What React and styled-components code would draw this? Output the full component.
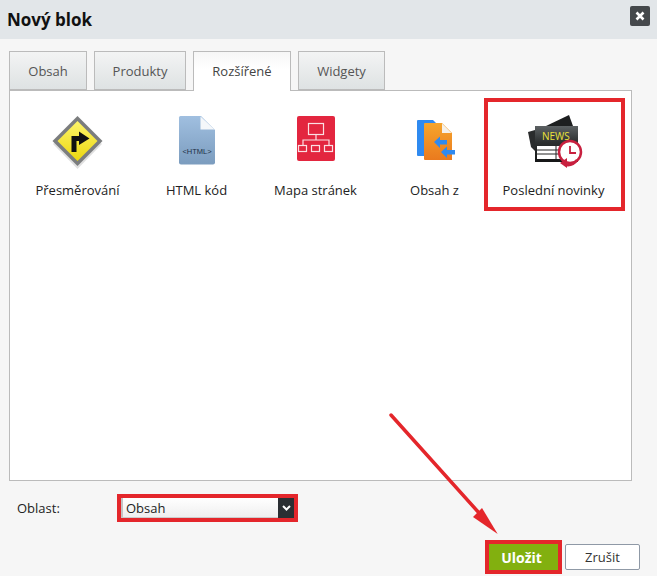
import React from "react";
import styled, { createGlobalStyle } from "styled-components";

const GlobalStyle = createGlobalStyle`
  html, body {
    margin: 0;
    padding: 0;
    height: 100%;
    overflow: hidden;
    background: #f6f6f6;
    font-family: "Open Sans", "Liberation Sans", sans-serif;
  }
`;

const Dialog = styled.div`
  position: relative;
  width: 657px;
  height: 576px;
  background: #f6f6f6;
  color: #222;
  font-size: 13px;
`;

const Header = styled.header`
  display: flex;
  align-items: center;
  justify-content: space-between;
  height: 39px;
  padding: 0 7px 0 7px;
  background: #e2e6e9;
`;

const Title = styled.h1`
  margin: 0;
  font-size: 17px;
  font-weight: 700;
  line-height: 36px;
  color: #111;
`;

const CloseButton = styled.button`
  display: flex;
  align-items: center;
  justify-content: center;
  width: 20px;
  height: 20px;
  margin-bottom: 7px;
  padding: 0;
  border: 0;
  border-radius: 2px;
  background: #45494c;
`;

const Body = styled.div`
  padding: 12px 25px 0 9px;
`;

const Tabs = styled.div`
  display: flex;
  gap: 7px;
  height: 39px;
`;

const Tab = styled.div`
  box-sizing: border-box;
  width: ${(p) => p.$width}px;
  height: ${(p) => (p.$active ? "40px" : "39px")};
  border: 1px solid #bbb;
  border-bottom: ${(p) => (p.$active ? "0" : "1px solid #bbb")};
  background: ${(p) =>
    p.$active
      ? "linear-gradient(#f6f6f6, #fff 45%)"
      : "linear-gradient(#f3f4f4, #dee2e3)"};
  color: ${(p) => (p.$active ? "#444" : "#555")};
  line-height: 38px;
  text-align: center;
  position: relative;
  z-index: ${(p) => (p.$active ? 1 : 0)};
`;

const Panel = styled.div`
  box-sizing: border-box;
  display: flex;
  height: 391px;
  padding: 18px 0 0 9px;
  border: 1px solid #bbb;
  background: #fff;
`;

const Item = styled.div`
  position: relative;
  display: flex;
  flex-direction: column;
  align-items: center;
  width: 119px;
  height: 92px;

  ${(p) =>
    p.$marked &&
    `
    &::after {
      content: "";
      position: absolute;
      left: -11px;
      top: -11px;
      width: 141px;
      height: 113px;
      box-sizing: border-box;
      border: 4px solid #e4262b;
    }
  `}
`;

const IconSlot = styled.svg`
  display: block;
  width: 65px;
  height: 64px;
`;

const ItemLabel = styled.span`
  margin: 8px 2px 0 0;
  line-height: 18px;
  color: #222;
  white-space: nowrap;
`;

const AreaRow = styled.div`
  display: flex;
  align-items: center;
  height: 20px;
  margin-top: 17px;
  padding-left: 8px;
`;

const AreaLabel = styled.label`
  width: 104px;
  color: #222;
`;

const Select = styled.div`
  box-sizing: border-box;
  display: flex;
  width: 173px;
  height: 20px;
  outline: 4px solid #e4262b;
  border-left: 2px solid #c4c4c4;
  border-bottom: 1px solid #ccc;
  background: linear-gradient(#fff, #efefef);
`;

const SelectValue = styled.span`
  flex: 1;
  padding-left: 3px;
  line-height: 21px;
  color: #222;
`;

const SelectArrow = styled.span`
  display: flex;
  align-items: center;
  justify-content: center;
  width: 16px;
  height: 20px;
  background: #2b2f33;
`;

const Actions = styled.div`
  display: flex;
  justify-content: flex-end;
  gap: 7px;
  margin: 26px -8px 0 0;
`;

const SaveButton = styled.button`
  box-sizing: border-box;
  width: 69px;
  height: 26px;
  padding: 0 4px 0 0;
  border: 0;
  outline: 4px solid #e4262b;
  background: #82b00f;
  color: #fff;
  font: 700 14px "Open Sans", sans-serif;
`;

const CancelButton = styled.button`
  box-sizing: border-box;
  width: 75px;
  height: 26px;
  padding: 0;
  border: 1px solid #8f99a6;
  border-radius: 2px;
  background: #fff;
  color: #333;
  font: 400 13px "Open Sans", sans-serif;
`;

const ArrowOverlay = styled.svg`
  position: absolute;
  left: 385px;
  top: 408px;
  width: 120px;
  height: 134px;
  pointer-events: none;
`;

const SignIcon = () => (
  <IconSlot viewBox="0 0 65 64">
    <defs>
      <linearGradient id="signFill" x1="0" y1="0" x2="0" y2="1">
        <stop offset="0" stopColor="#fdf46a" />
        <stop offset="1" stopColor="#ecd70f" />
      </linearGradient>
    </defs>
    <path d="M31.5 10 L56 35 L31.5 60 L7 35 Z" fill="#000" opacity="0.12" />
    <path d="M31.5 7 L56.5 32 L31.5 57 L6.5 32 Z" fill="#7b7d7e" />
    <path d="M31.5 12 L51.5 32 L31.5 52 L11.5 32 Z" fill="url(#signFill)" />
    <path d="M25.500 43 V27 H33 V22.500 L43.500 29.500 L33 36 V32 H30.500 V43 Z" fill="#111" />
  </IconSlot>
);

const HtmlIcon = () => (
  <IconSlot viewBox="0 0 65 64">
    <defs>
      <linearGradient id="htmlFill" x1="0" y1="0" x2="0" y2="1">
        <stop offset="0" stopColor="#a0bfe0" />
        <stop offset="1" stopColor="#7b9cbe" />
      </linearGradient>
    </defs>
    <path d="M15.500 7 H36 L50 21 V53.500 Q50 55.500 48 55.500 H16 Q14 55.500 14 53.500 V8.500 Q14 7 15.500 7 Z" fill="url(#htmlFill)" />
    <path d="M35.500 7.500 L49.500 20.500 H35.500 Z" fill="#f4f7fa" />
    <text x="32" y="45" textAnchor="middle" fontSize="7.500" fontFamily="Liberation Sans, sans-serif" fill="#1e3146">
      {"<HTML>"}
    </text>
  </IconSlot>
);

const MapIcon = () => (
  <IconSlot viewBox="0 0 65 64">
    <rect x="13" y="7" width="38" height="45" rx="2" fill="#e3263f" />
    <g fill="none" stroke="#fbdfe3" strokeWidth="1.200">
      <rect x="24.500" y="14.500" width="15" height="11" />
      <path d="M32 25.500 V31 M19 36 V31 H45 V36" />
      <rect x="14.500" y="36.500" width="8" height="6" />
      <rect x="27.500" y="36.500" width="8" height="6" />
      <rect x="40.500" y="36.500" width="8" height="6" />
    </g>
  </IconSlot>
);

const CopyIcon = () => (
  <IconSlot viewBox="0 0 65 64">
    <defs>
      <linearGradient id="copyFill" x1="0" y1="0" x2="0" y2="1">
        <stop offset="0" stopColor="#f6a52c" />
        <stop offset="1" stopColor="#ea7a1e" />
      </linearGradient>
    </defs>
    <path d="M15 11 H30 L36 17 V47 H15 Q14 47 14 46 V12 Q14 11 15 11 Z" fill="#2f8af0" />
    <path d="M22 14 H39 L49 24 V51 H22 Q21 51 21 50 V15 Q21 14 22 14 Z" fill="url(#copyFill)" />
    <path d="M39 14.500 L48.500 24 H39 Z" fill="#f5f1ea" />
    <path d="M31 33 L37 27.500 V31 H44 V35.500 H37 V39 Z" fill="#2f8af0" />
    <path d="M38 43 L44 37.500 V41 H52 V45.500 H44 V49 Z" fill="#2f8af0" />
  </IconSlot>
);

const NewsIcon = () => (
  <IconSlot viewBox="0 0 65 64">
    <defs>
      <linearGradient id="newsFill" x1="0" y1="0" x2="0" y2="1">
        <stop offset="0" stopColor="#5c6163" />
        <stop offset="0.45" stopColor="#2d3031" />
        <stop offset="1" stopColor="#151617" />
      </linearGradient>
    </defs>
    <path d="M24 17 L47 6 L51 17 Z" fill="#1d1f20" />
    <path d="M13 21 L6 23 L9 38 L13 42 Z" fill="#2a2c2d" />
    <rect x="13" y="17" width="43" height="36" fill="url(#newsFill)" />
    <text x="20" y="31" fontSize="10" fontFamily="Open Sans, sans-serif" fill="#ece33a">NEWS</text>
    <rect x="15" y="37" width="36" height="13" fill="#fff" />
    <path d="M15 41 H51 M15 45 H51 M34 37 V50" stroke="#222" strokeWidth="1" />
    <circle cx="48" cy="43" r="11" fill="#fff" stroke="#c8203f" strokeWidth="2.500" />
    <path d="M48 37 V44 H54" fill="none" stroke="#c8203f" strokeWidth="1.800" />
    <path d="M38 54 L45 49 L45 59 Z" fill="#c8203f" />
    <path d="M44 56 Q51 57 55 51" fill="none" stroke="#c8203f" strokeWidth="2.500" />
  </IconSlot>
);

const tabs = [
  { label: "Obsah", width: 78 },
  { label: "Produkty", width: 92 },
  { label: "Rozšířené", width: 98, active: true },
  { label: "Widgety", width: 87 },
];

const items = [
  { label: "Přesměrování", Icon: SignIcon },
  { label: "HTML kód", Icon: HtmlIcon },
  { label: "Mapa stránek", Icon: MapIcon },
  { label: "Obsah z", Icon: CopyIcon },
  { label: "Poslední novinky", Icon: NewsIcon, marked: true },
];

export default function App() {
  return (
    <Dialog>
      <GlobalStyle />
      <Header>
        <Title>Nový blok</Title>
        <CloseButton aria-label="Zavřít">
          <svg width="10" height="10" viewBox="0 0 10 10">
            <path d="M1.500 1.500 L8.500 8.500 M8.500 1.500 L1.500 8.500" stroke="#fff" strokeWidth="2.600" />
          </svg>
        </CloseButton>
      </Header>
      <Body>
        <Tabs>
          {tabs.map((t) => (
            <Tab key={t.label} $active={t.active} $width={t.width}>
              {t.label}
            </Tab>
          ))}
        </Tabs>
        <Panel>
          {items.map(({ label, Icon, marked }) => (
            <Item key={label} $marked={marked}>
              <Icon />
              <ItemLabel>{label}</ItemLabel>
            </Item>
          ))}
        </Panel>
        <AreaRow>
          <AreaLabel>Oblast:</AreaLabel>
          <Select>
            <SelectValue>Obsah</SelectValue>
            <SelectArrow>
              <svg width="9" height="6" viewBox="0 0 9 6">
                <path d="M1 1 L4.500 4.500 L8 1" fill="none" stroke="#fff" strokeWidth="2" />
              </svg>
            </SelectArrow>
          </Select>
        </AreaRow>
        <Actions>
          <SaveButton>Uložit</SaveButton>
          <CancelButton>Zrušit</CancelButton>
        </Actions>
      </Body>
      <ArrowOverlay viewBox="0 0 120 134">
        <path d="M6 7 L95 106" stroke="#e4262b" strokeWidth="3.500" strokeLinecap="round" />
        <path d="M112.700 126 L88 109 L97 100 Z" fill="#e4262b" />
      </ArrowOverlay>
    </Dialog>
  );
}
